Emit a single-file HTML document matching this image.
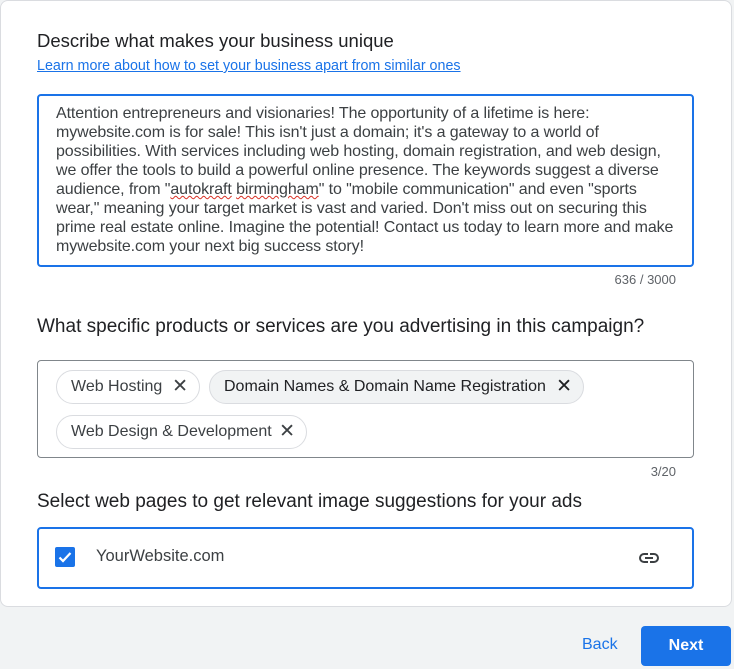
<!DOCTYPE html>
<html><head><style>
*{box-sizing:border-box;margin:0;padding:0}
body{width:734px;height:669px;background:#f1f3f4;font-family:"Liberation Sans",sans-serif;position:relative;overflow:hidden;color:#202124}
.card{position:absolute;left:0;top:0;width:732px;height:607px;background:#fff;border:1px solid #dadce0;border-radius:8px}
.a{position:absolute;white-space:nowrap}
h2{font-size:19px;font-weight:normal;color:#202124}
.ta{position:absolute;left:37px;top:94px;width:657px;height:173px;border:2px solid #1a73e8;border-radius:4px;padding:8px 0 0 17px;font-size:16px;line-height:19px;color:#3c4043;white-space:nowrap;letter-spacing:-0.1px}
.sq{text-decoration:underline wavy #d93025;text-decoration-thickness:1px}
.cnt{font-size:13px;color:#5f6368}
.chips{position:absolute;left:37px;top:360px;width:657px;height:98px;border:1px solid #80868b;border-radius:4px}
.chip{position:absolute;height:34px;border:1px solid #dadce0;border-radius:17px;font-size:16px;color:#3c4043;padding:0 0 0 14px;line-height:32px}
.chip b{font-weight:normal;font-size:19px;position:absolute;right:11px;top:0}
.box{position:absolute;left:37px;top:527px;width:657px;height:62px;border:2px solid #1a73e8;border-radius:4px}
.cb{position:absolute;left:16px;top:18px;width:20px;height:20px;background:#1a73e8;border-radius:2px}
.next{position:absolute;left:641px;top:626px;width:90px;height:40px;background:#1a73e8;border-radius:4px;color:#fff;font-size:16px;font-weight:bold;text-align:center;line-height:40px}
</style></head><body>
<div class="card"></div>
<h2 class="a" style="left:37px;top:30px;font-size:18.5px">Describe what makes your business unique</h2>
<div class="a" style="left:37px;top:58px;font-size:14.3px;color:#1a73e8;text-decoration:underline">Learn more about how to set your business apart from similar ones</div>
<div class="ta">Attention entrepreneurs and visionaries! The opportunity of a lifetime is here:<br>mywebsite.com is for sale! This isn't just a domain; it's a gateway to a world of<br>possibilities. With services including web hosting, domain registration, and web design,<br>we offer the tools to build a powerful online presence. The keywords suggest a diverse<br>audience, from "<span class="sq">autokraft</span> <span class="sq">birmingham</span>" to "mobile communication" and even "sports<br>wear," meaning your target market is vast and varied. Don't miss out on securing this<br>prime real estate online. Imagine the potential! Contact us today to learn more and make<br>mywebsite.com your next big success story!</div>
<div class="a cnt" style="right:58px;top:272px">636 / 3000</div>
<h2 class="a" style="left:37px;top:316px">What specific products or services are you advertising in this campaign?</h2>
<div class="chips">
<div class="chip" style="left:18px;top:9px;width:144px">Web Hosting<b>✕</b></div>
<div class="chip" style="left:171px;top:9px;width:375px;background:#f1f3f4;color:#202124">Domain Names &amp; Domain Name Registration<b>✕</b></div>
<div class="chip" style="left:18px;top:54px;width:251px">Web Design &amp; Development<b>✕</b></div>
</div>
<div class="a cnt" style="right:58px;top:464px">3/20</div>
<h2 class="a" style="left:37px;top:491px">Select web pages to get relevant image suggestions for your ads</h2>
<div class="box">
<div class="cb"><svg width="20" height="20" viewBox="0 0 20 20"><path d="M4.5 10.5l3.5 3.5 7.5-8" stroke="#fff" stroke-width="2.2" fill="none"/></svg></div>
<div class="a" style="left:57px;top:18px;font-size:16.5px;color:#3c4043">YourWebsite.com</div>
<svg class="a" style="left:598px;top:17px" width="24" height="24" viewBox="0 0 24 24"><path d="M11 8H7a4 4 0 0 0 0 8h4M13 8h4a4 4 0 0 1 0 8h-4M8 12h8" stroke="#3c4043" stroke-width="2" fill="none"/></svg>
</div>
<div class="a" style="left:582px;top:636px;font-size:16px;color:#1a73e8">Back</div>
<div class="next">Next</div>
</body></html>
